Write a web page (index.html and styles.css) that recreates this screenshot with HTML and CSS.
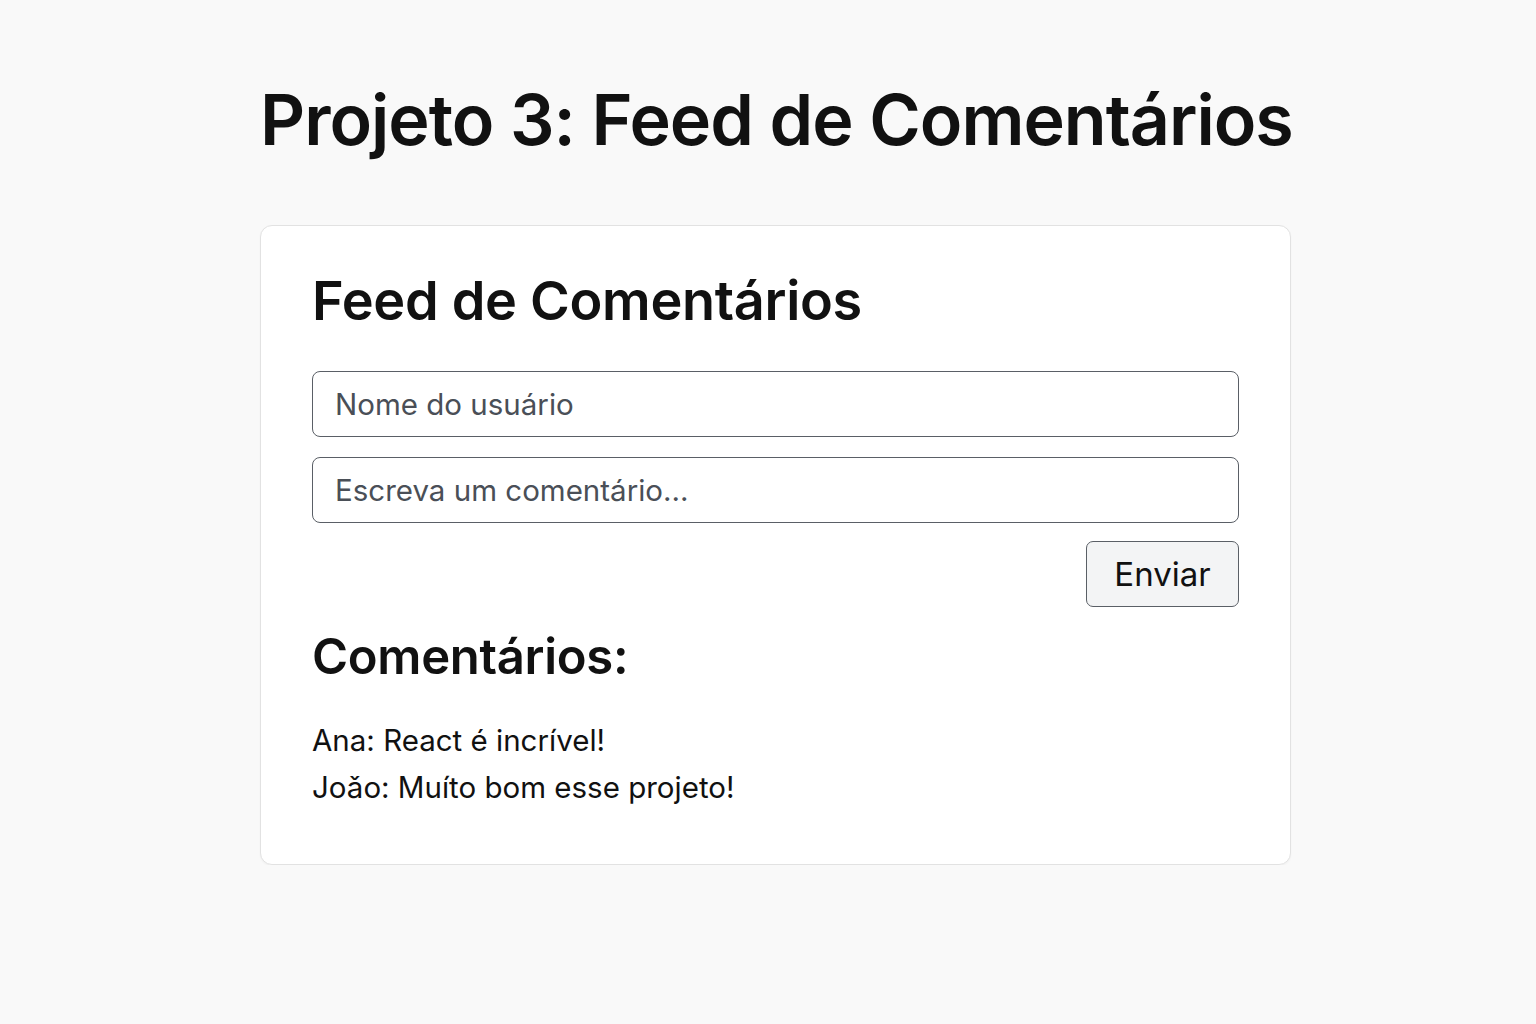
FILE: index.html
```html
<!DOCTYPE html>
<html lang="pt-BR">
<head>
<meta charset="utf-8">
<title>Projeto 3: Feed de Comentários</title>
<link rel="stylesheet" href="styles.css">
</head>
<body>
<main class="page">
  <h1 class="page-title">Projeto 3: Feed de Comentários</h1>
  <section class="card">
    <h2 class="card-title">Feed de Comentários</h2>
    <form class="comment-form">
      <input class="field" type="text" placeholder="Nome do usuário">
      <input class="field" type="text" placeholder="Escreva um comentário...">
      <div class="actions">
        <button class="btn" type="button">Enviar</button>
      </div>
    </form>
    <h3 class="list-title">Comentários:</h3>
    <ul class="comments">
      <li class="comment">Ana: React é incrível!</li>
      <li class="comment">Joǎo: Muíto bom esse projeto!</li>
    </ul>
  </section>
</main>
</body>
</html>
```
FILE: styles.css
```css
* { box-sizing: border-box; }
html, body { margin: 0; padding: 0; }
body {
  background: #f9f9f9;
  font-family: Inter, "Noto Sans", sans-serif;
  color: #111;
}
.page {
  width: 1031px;
  margin: 0 0 0 calc(50% - 508px);
  padding-top: 78px;
  display: flex;
  flex-direction: column;
  align-items: stretch;
}
.page-title {
  margin: 0;
  text-align: center;
  white-space: nowrap;
  font-size: 70px;
  font-weight: 600;
  line-height: 84px;
  letter-spacing: -1px;
  color: #111;
}
.card {
  margin-top: 63px;
  background: #fff;
  border: 1px solid #e2e2e2;
  border-radius: 12px;
  padding: 42px 51px 53px;
  box-shadow: 0 1px 2px rgba(0,0,0,0.04);
}
.card-title {
  margin: 0;
  font-size: 54px;
  font-weight: 600;
  line-height: 66px;
  letter-spacing: -0.3px;
}
.comment-form {
  margin-top: 37px;
  display: flex;
  flex-direction: column;
  gap: 20px;
}
.field {
  width: 100%;
  height: 66px;
  border: 1px solid #5a5f66;
  border-radius: 8px;
  padding: 0 22px;
  font-family: Inter, "Noto Sans", sans-serif;
  font-size: 29.5px;
  color: #222;
  background: #fff;
}
.field::placeholder { color: #4a4f57; opacity: 1; }
.actions {
  display: flex;
  justify-content: flex-end;
  margin-top: -2px;
}
.btn {
  width: 153px;
  height: 66px;
  background: #f3f4f5;
  border: 1px solid #5a5f66;
  border-radius: 7px;
  font-family: Inter, "Noto Sans", sans-serif;
  font-size: 33px;
  color: #111;
  padding: 0;
}
.list-title {
  margin: 20px 0 0;
  font-size: 49px;
  font-weight: 600;
  line-height: 60px;
  letter-spacing: -0.3px;
}
.comments {
  list-style: none;
  margin: 30px 0 0;
  padding: 0;
}
.comment {
  font-size: 29.5px;
  line-height: 47px;
  color: #111;
}
```
